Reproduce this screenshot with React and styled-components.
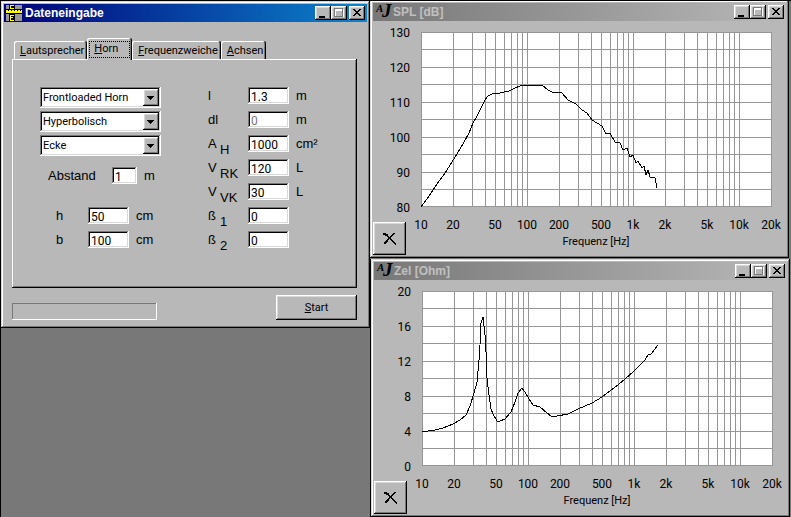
import React from 'react';
import styled, { createGlobalStyle } from 'styled-components';

const GRAY = '#b8b8b8';
const SHADOW = '#787878';
const LIGHT = '#d8d8d8';
const UI = 'Roboto, "Liberation Sans", sans-serif';
const SANS = '"Liberation Sans", Arial, sans-serif';

const GlobalStyle = createGlobalStyle`
  * { box-sizing: border-box; }
  body { margin: 0; background: ${SHADOW}; color: #000; font: 11px/16px ${UI}; }
  button, input, select { font: inherit; color: inherit; margin: 0; border-radius: 0; }
`;

const raised = `inset -1px -1px #000, inset 1px 1px #fff, inset -2px -2px ${SHADOW}, inset 2px 2px ${LIGHT}`;
const sunken = `inset -1px -1px #fff, inset 1px 1px ${SHADOW}, inset -2px -2px ${LIGHT}, inset 2px 2px #000`;

const Desktop = styled.main`
  display: grid;
  grid-template-columns: minmax(360px, 369fr) minmax(0, 421fr);
  align-items: start;
  min-height: 100vh;
  border-top: 1px solid #000;
  border-left: 1px solid #000;
`;

const Frame = styled.section`
  background: ${GRAY};
  padding: ${p => (p.$flush ? '2px 3px 3px' : '3px')};
  box-shadow: inset -1px -1px #000, inset ${p => (p.$flush ? '1px 0' : '1px 1px')} ${LIGHT},
    inset -2px -2px ${SHADOW}, inset ${p => (p.$flush ? '2px 1px' : '2px 2px')} #fff;
`;

const ChartColumn = styled.div`
  display: grid;
  gap: 1px;
`;

const ChartSlot = styled.div`
  padding: ${p => (p.$shifted ? '0 1px' : '0 2px 0 0')};
  background: linear-gradient(#000, #000) left / 1px 100% no-repeat;
`;

const TitleBar = styled.header`
  display: flex;
  align-items: center;
  height: 18px;
  padding: 0 2px;
  color: ${p => (p.$active ? '#fff' : '#c0c0c0')};
  background: ${p => (p.$active
    ? 'linear-gradient(90deg, #000078, #0c84cc)'
    : `linear-gradient(90deg, #787878, ${GRAY})`)};
`;

const Title = styled.h1`
  flex: 1;
  margin: 0 0 0 3px;
  font: bold 12px/18px ${SANS};
  white-space: nowrap;
`;

const ChartTitle = styled(Title)`
  margin-left: 1px;
`;

const CaptionButtons = styled.div`
  display: flex;
`;

const CaptionButton = styled.button`
  display: block;
  width: 16px;
  height: 14px;
  padding: 0;
  border: 0;
  background: ${GRAY};
  box-shadow: ${raised};
  margin-left: ${p => (p.$apart ? '2px' : '0')};
`;

const Icon = styled.svg`
  display: block;
  flex: none;
`;

const DialogBody = styled.form`
  padding: 16px 10px 5px 8px;
`;

const Tabs = styled.div`
  display: flex;
  align-items: flex-end;
  position: relative;
  z-index: 1;
  padding-left: 2px;
  margin-bottom: -1px;
`;

const Tab = styled.button`
  height: ${p => (p.$selected ? '22px' : '18px')};
  margin-bottom: ${p => (p.$selected ? '0' : '1px')};
  padding: ${p => (p.$selected ? '2px' : '1px 3px 0 6px')};
  border: 0;
  border-radius: 2px 2px 0 0;
  background: ${GRAY};
  white-space: nowrap;
  box-shadow: inset -1px 0 #000, inset 1px 1px #fff, inset -2px 0 ${SHADOW};
`;

const FocusMark = styled.span`
  display: block;
  height: 17px;
  padding: 0 11px 0 4px;
  border: 1px dotted #000;
  line-height: 14px;
`;

const Panel = styled.div`
  display: grid;
  grid-template-columns: 168px 1fr;
  align-items: start;
  padding: 28px 28px 36px;
  box-shadow: inset -1px -1px #000, inset 1px 1px #fff, inset -2px -2px ${SHADOW};
`;

const Stack = styled.div`
  display: grid;
  gap: 3px;
  justify-items: start;
`;

const ComboBox = styled.div`
  display: grid;
  grid-template-columns: 1fr 16px;
  width: 121px;
  height: 21px;
  padding: 2px;
  background: #fff;
  box-shadow: ${sunken};
`;

const Select = styled.select`
  grid-area: 1 / 1 / 2 / 3;
  appearance: none;
  border: 0;
  padding: 0 0 0 1px;
  background: transparent;
  outline: 0;
`;

const ComboArrow = styled.span`
  grid-area: 1 / 2;
  display: grid;
  place-items: center;
  background: ${GRAY};
  box-shadow: ${raised};
  pointer-events: none;
`;

const Field = styled.div`
  display: grid;
  grid-template-columns: ${p => p.$labelWidth} auto auto;
  justify-content: start;
  align-items: start;
  height: 21px;
  padding-left: ${p => p.$indent || '0'};
  font: 13px/17px ${SANS};
`;

const FieldLabel = styled.label`
  display: grid;
  grid-template-columns: ${p => (p.$indexed ? '12px auto' : 'auto')};
  justify-content: start;
`;

const Index = styled.span`
  padding-top: 6px;
`;

const Entry = styled.input`
  width: ${p => (p.$short ? '25px' : '41px')};
  height: 17px;
  padding: 2px 2px 0 3px;
  border: 0;
  outline: 0;
  font: 12px/15px ${UI};
  background: #fff;
  box-shadow: ${sunken};
  &:disabled { color: ${SHADOW}; }
`;

const Unit = styled.span`
  padding-left: 7px;
`;

const Footer = styled.div`
  display: flex;
  align-items: flex-end;
  justify-content: space-between;
  padding-top: 7px;
`;

const Progress = styled.div`
  width: 145px;
  height: 17px;
  box-shadow: inset -1px -1px #fff, inset 1px 1px ${SHADOW};
`;

const StartButton = styled.button`
  width: 81px;
  height: 25px;
  border: 0;
  padding: 0;
  background: ${GRAY};
  box-shadow: ${raised};
`;

const ChartBody = styled.div`
  display: grid;
`;

const ChartSvg = styled.svg`
  grid-area: 1 / 1;
  display: block;
  width: 100%;
  height: auto;
  font: 12px ${UI};
`;

const AxisTitle = styled.text`
  font-size: 11px;
`;

const ClearButton = styled.button`
  grid-area: 1 / 1;
  place-self: end start;
  display: grid;
  place-items: center;
  width: 33px;
  height: 33px;
  padding: 0;
  border: 0;
  background: ${GRAY};
  box-shadow: ${raised};
`;

const Monogram = styled(Icon)`
  overflow: visible;
  font: italic bold 11px "Liberation Serif", serif;
`;

const MonogramTall = styled.text`
  font-size: 19px;
`;

function WindowButtons() {
  return (
    <CaptionButtons>
      <CaptionButton type="button" aria-label="Minimieren">
        <Icon width="16" height="14"><path d="M4 10h6v2H4z" /></Icon>
      </CaptionButton>
      <CaptionButton type="button" aria-label="Maximieren">
        <Icon width="16" height="14" shapeRendering="crispEdges" fill="none">
          <path d="M4.500 3.500h8v7h-8z" stroke="#fff" />
          <path d="M3.500 2.500h8v8h-8z" stroke={SHADOW} />
          <path d="M4.500 4.500h6" stroke="#fff" />
        </Icon>
      </CaptionButton>
      <CaptionButton type="button" aria-label="Schließen" $apart>
        <Icon width="16" height="14" shapeRendering="crispEdges">
          <path d="M4 3h2v1h1v1h2V4h1V3h2v1h-1v1h-1v1H9v1h1v1h1v1h1v1h-2V9H9V8H7v1H6v1H4V9h1V8h1V7h1V6H6V5H5V4H4z" />
        </Icon>
      </CaptionButton>
    </CaptionButtons>
  );
}

function RulerIcon() {
  return (
    <Icon width="16" height="16" viewBox="0 0 16 16" shapeRendering="crispEdges">
      <path fill="#989898" d="M0 0h16v16H0z" />
      <path d="M3 0h6v4H3zM0 4h16v5H0zM3 9h6v7H3z" />
      <path fill="#ffff00" d="M4 0h4v1H5v2h3v1H4zM0 5h16v3H0zM4 10h4v1H5v1h2v1H5v2h3v1H4z" />
      <path d="M2 5h1v1H2zM5 5h1v1H5zM8 5h1v1H8zM11 5h1v1h-1zM14 5h1v1h-1z" />
    </Icon>
  );
}

function AjIcon() {
  return (
    <Monogram width="17" height="18" viewBox="0 0 17 18" aria-hidden="true">
      <text x="1" y="9">A</text>
      <MonogramTall x="7" y="14">J</MonogramTall>
    </Monogram>
  );
}

function Combo({ label, value, options }) {
  return (
    <ComboBox>
      <Select aria-label={label} defaultValue={value}>
        {options.map(o => <option key={o}>{o}</option>)}
      </Select>
      <ComboArrow>
        <Icon width="8" height="4" shapeRendering="crispEdges">
          <path d="M0 0h7v1H6v1H5v1H4v1H3V3H2V2H1V1H0z" />
        </Icon>
      </ComboArrow>
    </ComboBox>
  );
}

function Value({ id, label, index, unit, value, short, disabled, labelWidth = '40px', indent }) {
  return (
    <Field $labelWidth={labelWidth} $indent={indent}>
      <FieldLabel htmlFor={id} $indexed={Boolean(index)}>
        <span>{label}</span>
        {index && <Index>{index}</Index>}
      </FieldLabel>
      <Entry id={id} defaultValue={value} $short={short} disabled={disabled} />
      <Unit>{unit}</Unit>
    </Field>
  );
}

const HORN_VALUES = [
  { id: 'l', label: 'l', value: '1.3', unit: 'm' },
  { id: 'dl', label: 'dl', value: '0', unit: 'm', disabled: true },
  { id: 'ah', label: 'A', index: 'H', value: '1000', unit: 'cm²' },
  { id: 'vrk', label: 'V', index: 'RK', value: '120', unit: 'L' },
  { id: 'vvk', label: 'V', index: 'VK', value: '30', unit: 'L' },
  { id: 'b1', label: 'ß', index: '1', value: '0' },
  { id: 'b2', label: 'ß', index: '2', value: '0' },
];

const LowerGroup = styled.div`
  display: grid;
  gap: 19px;
  padding-top: 11px;
`;

function Dialog() {
  return (
    <Frame>
      <TitleBar $active>
        <RulerIcon />
        <Title>Dateneingabe</Title>
        <WindowButtons />
      </TitleBar>
      <DialogBody onSubmit={e => e.preventDefault()}>
        <Tabs role="tablist">
          <Tab type="button" role="tab" aria-selected="false"><u>L</u>autsprecher</Tab>
          <Tab type="button" role="tab" aria-selected="true" $selected>
            <FocusMark><u>H</u>orn</FocusMark>
          </Tab>
          <Tab type="button" role="tab" aria-selected="false"><u>F</u>requenzweiche</Tab>
          <Tab type="button" role="tab" aria-selected="false"><u>A</u>chsen</Tab>
        </Tabs>
        <Panel role="tabpanel">
          <div>
            <Stack>
              <Combo label="Bauart" value="Frontloaded Horn" options={['Frontloaded Horn']} />
              <Combo label="Verlauf" value="Hyperbolisch" options={['Hyperbolisch']} />
              <Combo label="Aufstellung" value="Ecke" options={['Ecke']} />
            </Stack>
            <LowerGroup>
              <Value id="abstand" label="Abstand" value="1" unit="m" short labelWidth="64px" indent="8px" />
              <Stack>
                <Value id="h" label="h" value="50" unit="cm" labelWidth="32px" indent="16px" />
                <Value id="b" label="b" value="100" unit="cm" labelWidth="32px" indent="16px" />
              </Stack>
            </LowerGroup>
          </div>
          <Stack>
            {HORN_VALUES.map(v => <Value key={v.id} {...v} />)}
          </Stack>
        </Panel>
        <Footer>
          <Progress role="progressbar" aria-label="Fortschritt" />
          <StartButton type="submit"><u>S</u>tart</StartButton>
        </Footer>
      </DialogBody>
    </Frame>
  );
}

const PLOT = { x: 48, y: 11, w: 350, h: 175 };
const freqX = f => Math.round(PLOT.x + (PLOT.w * Math.log10(f / 10)) / Math.log10(2000));
const GRID_FREQS = [10, 100, 1000, 10000]
  .flatMap(d => [1, 2, 3, 4, 5, 6, 7, 8, 9].map(n => n * d))
  .filter(f => f <= 20000);
const X_LABELS = [
  [10, '10'], [20, '20'], [50, '50'], [100, '100'], [200, '200'], [500, '500'],
  [1000, '1k'], [2000, '2k'], [5000, '5k'], [10000, '10k'], [20000, '20k'],
];

const SPL_CURVE = `0,175 8,164 16,152 24,141 31,130 36,122 42,112 48,101 52,91 56,84 60,76 64,68 67,64 71,62
  79,61 88,59 94,56 99,54 107,53 121,53 127,58 133,61 137,60 141,61 147,68 155,72 161,78 166,81 171,88
  181,94 185,102 189,101 194,110 199,111 202,118 206,116 209,125 212,123 215,131 217,129 221,136 223,134
  225,143 227,138 229,145 234,146 236,156`;
const ZEL_CURVE = `0,141 13,139 21,137 31,133 38,129 44,124 48,115 52,102 55,91 57,69 58,54 59,32 61,26 63,44
  64,61 65,87 67,104 69,118 71,123 75,130 78,130 83,128 89,121 93,111 96,102 100,97 103,101 107,108
  111,114 118,116 125,122 129,125 135,125 146,123 156,118 163,115 170,112 180,106 189,99 196,94 203,88
  212,80 223,69 226,64 229,63 236,54`;

function Chart({ title, labels, curve }) {
  const rows = Array.from({ length: 11 }, (_, i) => Math.round(PLOT.y + (PLOT.h * i) / 10 - 0.2));
  return (
    <ChartBody>
      <ChartSvg viewBox="0 0 413 234" role="img" aria-label={title}>
        <rect x={PLOT.x} y={PLOT.y} width={PLOT.w} height={PLOT.h} fill="#fff" />
        <g fill="#969696" shapeRendering="crispEdges">
          {GRID_FREQS.map(f => (
            <rect key={f} x={freqX(f)} y={PLOT.y} width="1" height={PLOT.h} />
          ))}
          {rows.map((y, i) => (
            <rect key={y} x={PLOT.x} y={i === 10 ? y - 1 : y} width={PLOT.w + 1} height="1" />
          ))}
        </g>
        <polyline points={curve} fill="none" stroke="#000" shapeRendering="crispEdges"
          transform={`translate(${PLOT.x} ${PLOT.y})`} />
        {labels.map((text, i) => (
          <text key={text} x="37" textAnchor="end" y={PLOT.y + 35 * i + 5}>{text}</text>
        ))}
        {X_LABELS.map(([f, text]) => (
          <text key={text} x={freqX(f)} y="208" textAnchor="middle">{text}</text>
        ))}
        <AxisTitle x="223" y="224" textAnchor="middle">Frequenz [Hz]</AxisTitle>
      </ChartSvg>
      <ClearButton type="button" aria-label="Löschen">
        <Icon width="16" height="16" viewBox="0 0 16 16" shapeRendering="crispEdges">
          <path d="M1 2h3v1h2v2h1v1h1v1h1v1h1v1h1v1h1v1h1v1h1v2h-1v-1h-1v-1h-1v-1h-1v-1H9V9H8V8H7V7H6V6H5V5H3V4H1z" />
          <path d="M11 2h2v1h-1v1h-1v1h-1v1H9v1H8v1H7v1H6v2H5v1H4v1H2v-2h1v-1h1V9h1V8h1V7h1V6h1V5h1V4h1V3h1z" />
        </Icon>
      </ClearButton>
    </ChartBody>
  );
}

function ChartWindow({ title, flush, ...chart }) {
  return (
    <ChartSlot $shifted={!flush}>
      <Frame $flush={flush}>
        <TitleBar>
          <AjIcon />
          <ChartTitle as="h2">{title}</ChartTitle>
          <WindowButtons />
        </TitleBar>
        <Chart title={title} {...chart} />
      </Frame>
    </ChartSlot>
  );
}

export default function App() {
  return (
    <>
      <GlobalStyle />
      <Desktop>
        <Dialog />
        <ChartColumn>
          <ChartWindow title="SPL [dB]" flush labels={['130', '120', '110', '100', '90', '80']} curve={SPL_CURVE} />
          <ChartWindow title="Zel [Ohm]" labels={['20', '16', '12', '8', '4', '0']} curve={ZEL_CURVE} />
        </ChartColumn>
      </Desktop>
    </>
  );
}
